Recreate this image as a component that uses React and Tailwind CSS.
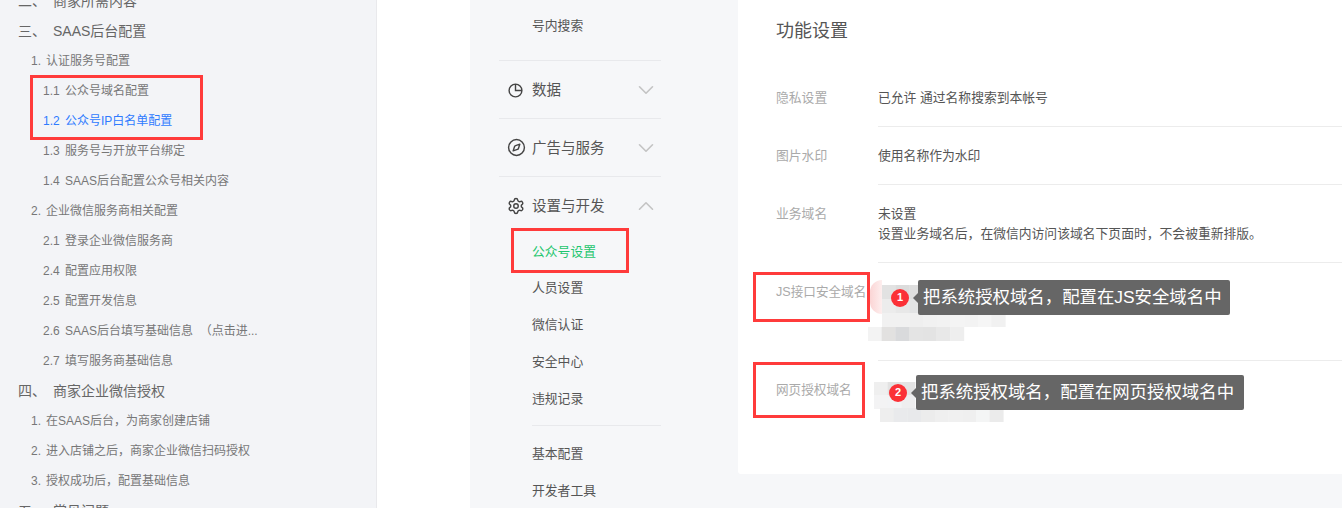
import React from "react";
import { ChevronDown, ChevronUp, Compass, Settings } from "lucide-react";

const font = { fontFamily: '"Liberation Sans", "Noto Sans CJK SC", sans-serif' };

const outline = [
  { level: 0, no: "二、", text: "商家所需内容" },
  { level: 0, no: "三、", text: "SAAS后台配置" },
  { level: 1, no: "1.", text: "认证服务号配置" },
  { level: 2, no: "1.1", text: "公众号域名配置" },
  { level: 2, no: "1.2", text: "公众号IP白名单配置", active: true },
  { level: 2, no: "1.3", text: "服务号与开放平台绑定" },
  { level: 2, no: "1.4", text: "SAAS后台配置公众号相关内容" },
  { level: 1, no: "2.", text: "企业微信服务商相关配置" },
  { level: 2, no: "2.1", text: "登录企业微信服务商" },
  { level: 2, no: "2.4", text: "配置应用权限" },
  { level: 2, no: "2.5", text: "配置开发信息" },
  { level: 2, no: "2.6", text: "SAAS后台填写基础信息\u00a0\u00a0（点击进..." },
  { level: 2, no: "2.7", text: "填写服务商基础信息" },
  { level: 0, no: "四、", text: "商家企业微信授权" },
  { level: 1, no: "1.", text: "在SAAS后台，为商家创建店铺" },
  { level: 1, no: "2.", text: "进入店铺之后，商家企业微信扫码授权" },
  { level: 1, no: "3.", text: "授权成功后，配置基础信息" },
  { level: 0, no: "五、", text: "常见问题" },
];

function OutlineRow({ item }) {
  if (item.level === 0) {
    return (
      <div className="flex h-[30px] items-center pl-[18px] pt-[1px] text-[14px] text-[#666]">
        <span className="w-[35px] shrink-0">{item.no}</span>
        <span>{item.text}</span>
      </div>
    );
  }
  const box = item.level === 1 ? "pl-[31px]" : "pl-[43px]";
  const numWidth = item.level === 1 ? "w-[15px]" : "w-[22px]";
  return (
    <div className={`flex h-[30px] items-center text-[12px] ${box} ${item.active ? "text-[#2f7bff]" : "text-[#777]"}`}>
      <span className={`shrink-0 ${numWidth}`}>{item.no}</span>
      <span className="whitespace-nowrap">{item.text}</span>
    </div>
  );
}

function NavGroup({ icon, label, open }) {
  const Chevron = open ? ChevronUp : ChevronDown;
  return (
    <div className={`flex h-[58px] items-center pl-[9px] pr-[2px] text-[14.5px] text-[#555] ${open ? "" : "border-b border-[#e8e9ec]"}`}>
      <span className="flex w-[24px] shrink-0">{icon}</span>
      <span className="flex-1 pt-[2px]">{label}</span>
      <Chevron size={26} strokeWidth={1.5} className="text-[#c4c4c4]" />
    </div>
  );
}

function NavItem({ children, active }) {
  return (
    <div className={`flex h-[36.7px] items-center pl-[33px] text-[12.8px] ${active ? "text-[#1fc66f]" : "text-[#555]"}`}>
      {children}
    </div>
  );
}

function SettingRow({ label, children, height, big, last, alignTop }) {
  return (
    <div className="flex" style={{ height }}>
      <div className={`w-[102px] shrink-0 text-[#aaa] ${big ? "text-[12.6px]" : "text-[12.8px]"} ${alignTop}`}>{label}</div>
      <div className={`flex-1 text-[12.8px] leading-[20px] text-[#555] ${last ? "" : "border-b border-[#ececec]"} ${alignTop}`}>{children}</div>
    </div>
  );
}

function Mosaic({ className, cells }) {
  return (
    <svg className={`absolute ${className}`} width="140" height="60" viewBox="0 0 140 60">
      <g style={{ filter: "blur(0.6px)" }}>
        {cells.map(([x, y, w, h, c], i) => (
          <rect key={i} x={x} y={y} width={w} height={h} fill={c} />
        ))}
      </g>
    </svg>
  );
}

function Hint({ className, no, pad, children }) {
  return (
    <div className={`absolute flex items-center ${className}`}>
      <span className="flex h-[18px] w-[18px] shrink-0 items-center justify-center rounded-full bg-[#fb3137] text-[11px] font-bold text-white">{no}</span>
      <span className="ml-[4px] h-0 w-0 border-y-[5px] border-r-[5px] border-y-transparent border-r-[#666]" />
      <span className={`flex h-[35px] items-center whitespace-nowrap rounded-[2px] bg-[#666] pl-[5px] text-[17.4px] text-white ${pad}`}>{children}</span>
    </div>
  );
}

// one row of mosaic tiles, each 13.7px wide
const tiles = (x, y, colors) => colors.map((c, i) => [x + i * 13.7, y, 14, 14, c]);

const mosaicOne = [
  ...tiles(14, 0, ["#e2e2e2", "#dcdcdc", "#dedede", "#e4e4e4"]),
  ...tiles(14, 14, ["#ececec", "#e8e8e8", "#e2e3e4", "#e8e8e8"]),
  ...tiles(14, 28, ["#f1f1f1", "#f1f1f1", "#efefef", "#f1f1f1", "#f2f2f2", "#f4f4f4", "#f3f3f3", "#f6f6f6", "#f1f1f1"]),
  ...tiles(0, 42, ["#f3f3f3", "#e2e1e0", "#d9dadc", "#e4e4e4", "#e3e3e3", "#e8e8e8", "#eeeeee"]),
];

const mosaicTwo = [
  ...tiles(2, 0, ["#efefef", "#e2e2e2", "#e4e4e4"]),
  ...tiles(2, 13, ["#f3f3f4", "#f2f3f5", "#eeeeef"]),
  ...tiles(8, 26, ["#eeeeee", "#e9eaec", "#e8e9eb", "#ececec", "#efefef", "#f0f0f0", "#efefef", "#f4f5f5", "#ebebeb"]),
];

export default function App() {
  return (
    <div className="relative flex h-[508px] w-[1342px] overflow-hidden bg-white" style={font}>
      {/* Document outline */}
      <aside className="w-[377px] shrink-0 border-r border-[#e9e9ec] bg-[#f3f4f7]">
        <div className="-mt-[14px]">
          {outline.map((item, i) => (
            <OutlineRow key={i} item={item} />
          ))}
        </div>
      </aside>

      <div className="w-[93px] shrink-0" />

      {/* Console */}
      <main className="flex flex-1 bg-[#f6f7f9]">
        <nav className="w-[268px] shrink-0 pl-[29px] pr-[77px]">
          <div className="flex h-[61px] items-center border-b border-[#e8e9ec] pb-[9px] pl-[33px] text-[12.8px] text-[#555]">号内搜索</div>
          <NavGroup
            label="数据"
            icon={
              <svg width="16" height="16" viewBox="0 0 16 16" fill="none" stroke="#444" strokeWidth="1.4">
                <circle cx="7.5" cy="8.5" r="6.4" />
                <path d="M7.5 2.1v6.4h6.4" />
              </svg>
            }
          />
          <NavGroup label="广告与服务" icon={<Compass size={19} strokeWidth={1.8} className="-ml-[1.5px] text-[#444]" />} />
          <NavGroup open label="设置与开发" icon={<Settings size={18} strokeWidth={1.9} className="-ml-[1px] text-[#444]" />} />
          <div className="-mt-[2px]">
            <NavItem active>公众号设置</NavItem>
            <NavItem>人员设置</NavItem>
            <NavItem>微信认证</NavItem>
            <NavItem>安全中心</NavItem>
            <NavItem>违规记录</NavItem>
          </div>
          <div className="ml-[33px] mt-[9px] border-t border-[#e8e9ec]" />
          <div className="mt-[9px]">
            <NavItem>基本配置</NavItem>
            <NavItem>开发者工具</NavItem>
          </div>
        </nav>

        <section className="h-[474px] flex-1 rounded-bl-[3px] bg-white pl-[38px]">
          <h2 className="flex h-[62px] items-center text-[18px] font-normal text-[#555]">功能设置</h2>
          <div>
            <SettingRow label="隐私设置" height={64.5} alignTop="pt-[26px]">已允许 通过名称搜索到本帐号</SettingRow>
            <SettingRow label="图片水印" height={58} alignTop="pt-[19px]">使用名称作为水印</SettingRow>
            <SettingRow label="业务域名" height={78} alignTop="pt-[19px]">
              未设置
              <br />
              设置业务域名后，在微信内访问该域名下页面时，不会被重新排版。
            </SettingRow>
            <SettingRow label="JS接口安全域名" height={98} big alignTop="pt-[20px]" />
            <SettingRow label="网页授权域名" height={60} big last alignTop="pt-[20px]" />
          </div>
        </section>
      </main>

      {/* Masked values and annotations laid over the screenshot */}
      <div className="absolute left-[870px] top-[280px] h-[34px] w-[12px] rounded-l-full bg-gradient-to-r from-[#fbd5d5] to-[#fdeeee]" />
      <Mosaic className="left-[868px] top-[285px]" cells={mosaicOne} />
      <Mosaic className="left-[872px] top-[382px]" cells={mosaicTwo} />
      <Hint className="left-[891px] top-[280px]" no="1" pad="pr-[8px]">把系统授权域名，配置在JS安全域名中</Hint>
      <Hint className="left-[889px] top-[375px]" no="2" pad="pr-[10px]">把系统授权域名，配置在网页授权域名中</Hint>

      <div className="absolute left-[30px] top-[75px] h-[65px] w-[173px] border-[3px] border-[#ff3b3b]" />
      <div className="absolute left-[511px] top-[228px] h-[45px] w-[118px] border-[3px] border-[#ff3b3b]" />
      <div className="absolute left-[753px] top-[272px] h-[50px] w-[117px] border-[3px] border-[#ff3b3b]" />
      <div className="absolute left-[753px] top-[362px] h-[56px] w-[112px] border-[3px] border-[#ff3b3b]" />
    </div>
  );
}
